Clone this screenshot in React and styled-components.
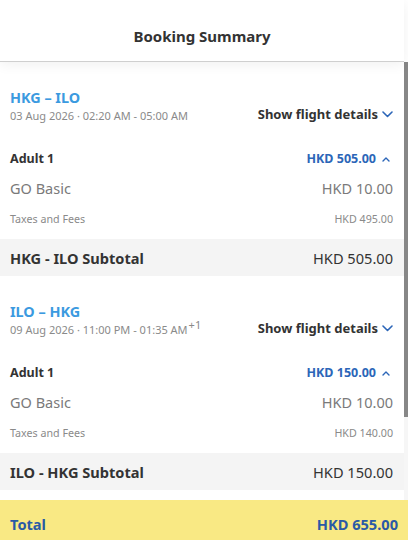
import React, { useLayoutEffect, useRef, useState } from "react";
import styled, { createGlobalStyle } from "styled-components";

const Global = createGlobalStyle`
  html, body { margin: 0; padding: 0; height: 100%; overflow: hidden; background: #fff; }
  body { font-family: "Noto Sans", "Open Sans", sans-serif; color: #333; }
  #root { height: 100%; }
`;

const Page = styled.div`
  height: 540px;
  display: flex;
  flex-direction: column;
  background: #fff;
`;

const Header = styled.header`
  flex: 0 0 auto;
  height: 62px;
  width: calc(100% - 4px);
  display: flex;
  align-items: center;
  justify-content: center;
  border-bottom: 1px solid #cfcfcf;
  box-shadow: 0 3px 12px rgba(0, 0, 0, 0.06);
  position: relative;
  z-index: 1;
  box-sizing: border-box;
  padding-top: 10px;
`;

const HeaderTitle = styled.h1`
  margin: 0;
  font-size: 15px;
  font-weight: 700;
  color: #333;
  line-height: 20px;
`;

const Body = styled.div`
  flex: 1 1 auto;
  min-height: 0;
  display: flex;
`;

const Scroller = styled.div`
  flex: 1 1 auto;
  overflow-y: auto;
  scrollbar-width: none;
  &::-webkit-scrollbar { display: none; }
`;

const Track = styled.div`
  flex: 0 0 4px;
  background: #f6f6f6;
  display: flex;
  flex-direction: column;
`;

const Thumb = styled.div`
  background: #878787;
  width: 100%;
`;

const Content = styled.div`
  padding-bottom: 112px;
`;

const Section = styled.section`
  padding-top: 26px;
`;

const FlightHead = styled.div`
  display: flex;
  align-items: flex-end;
  justify-content: space-between;
  padding: 0 11px 0 10px;
`;

const Route = styled.div`
  font-size: 14.4px;
  font-weight: 700;
  color: #3b9ae0;
  line-height: 19px;
`;

const DateLine = styled.div`
  font-size: 11px;
  color: #8a8a8a;
  line-height: 17px;
  sup {
    font-size: 11px;
    line-height: 0;
    vertical-align: 5px;
    margin-left: 1px;
  }
`;

const DetailsButton = styled.button`
  border: 0;
  background: none;
  padding: 0;
  font-family: inherit;
  font-size: 13px;
  font-weight: 700;
  color: #333;
  display: flex;
  align-items: center;
  gap: 4px;
  line-height: 16px;
  margin-bottom: 2px;
  cursor: pointer;
`;

const Row = styled.div`
  display: flex;
  justify-content: space-between;
  align-items: center;
  padding: 0 11px 0 10px;
  margin-top: ${(p) => p.$mt}px;
`;

const PaxLabel = styled.span`
  font-size: 12.5px;
  font-weight: 700;
  color: #333;
  line-height: 16px;
`;

const PaxPrice = styled.span`
  font-size: 12.5px;
  font-weight: 700;
  color: #2c66b8;
  line-height: 16px;
  display: flex;
  align-items: center;
  gap: 6px;
  padding-right: 3px;
`;

const FareText = styled.span`
  font-size: 14.5px;
  color: #7a7a7a;
  line-height: 20px;
`;

const FeeText = styled.span`
  font-size: 10.7px;
  color: #8a8a8a;
  line-height: 14px;
`;

const Subtotal = styled.div`
  margin-top: 13px;
  height: 37px;
  background: #f4f4f4;
  display: flex;
  align-items: center;
  justify-content: space-between;
  padding: 0 11px 0 10px;
`;

const SubLabel = styled.span`
  font-size: 14.6px;
  font-weight: 700;
  color: #333;
`;

const SubValue = styled.span`
  font-size: 14.6px;
  color: #333;
`;

const Footer = styled.footer`
  flex: 0 0 40px;
  background: #f9e984;
  display: flex;
  justify-content: space-between;
  align-items: flex-start;
  padding: 15px 10px 0 10px;
  box-sizing: border-box;
  font-size: 14.6px;
  font-weight: 700;
  line-height: 18px;
  color: #2a5aa6;
`;

const ChevronDown = () => (
  <svg width="11" height="7" viewBox="0 0 11 7" fill="none">
    <path d="M1 1l4.5 4.5L10 1" stroke="#2c66b8" strokeWidth="1.6" strokeLinecap="round" strokeLinejoin="round" />
  </svg>
);

const ChevronUp = () => (
  <svg width="8" height="5" viewBox="0 0 8 5" fill="none">
    <path d="M1 4l3-3 3 3" stroke="#2c66b8" strokeWidth="1.4" strokeLinecap="round" strokeLinejoin="round" />
  </svg>
);

const flights = [
  {
    route: "HKG – ILO",
    date: "03 Aug 2026 · 02:20 AM - 05:00 AM",
    plus: null,
    price: "HKD 505.00",
    fare: "HKD 10.00",
    fees: "HKD 495.00",
    subLabel: "HKG - ILO Subtotal",
    sub: "HKD 505.00",
  },
  {
    route: "ILO – HKG",
    date: "09 Aug 2026 · 11:00 PM - 01:35 AM",
    plus: "+1",
    price: "HKD 150.00",
    fare: "HKD 10.00",
    fees: "HKD 140.00",
    subLabel: "ILO - HKG Subtotal",
    sub: "HKD 150.00",
  },
];

export default function App() {
  const scrollRef = useRef(null);
  const [ratio, setRatio] = useState(0.8);

  useLayoutEffect(() => {
    const el = scrollRef.current;
    if (el && el.scrollHeight > 0) setRatio(Math.min(1, el.clientHeight / el.scrollHeight));
  }, []);

  return (
    <Page>
      <Global />
      <Header>
        <HeaderTitle>Booking Summary</HeaderTitle>
      </Header>
      <Body>
        <Scroller ref={scrollRef}>
          <Content>
            {flights.map((f) => (
              <Section key={f.route}>
                <FlightHead>
                  <div>
                    <Route>{f.route}</Route>
                    <DateLine>
                      {f.date}
                      {f.plus && <sup>{f.plus}</sup>}
                    </DateLine>
                  </div>
                  <DetailsButton>
                    Show flight details <ChevronDown />
                  </DetailsButton>
                </FlightHead>
                <Row $mt={27}>
                  <PaxLabel>Adult 1</PaxLabel>
                  <PaxPrice>
                    {f.price} <ChevronUp />
                  </PaxPrice>
                </Row>
                <Row $mt={11}>
                  <FareText>GO Basic</FareText>
                  <FareText>{f.fare}</FareText>
                </Row>
                <Row $mt={14}>
                  <FeeText>Taxes and Fees</FeeText>
                  <FeeText>{f.fees}</FeeText>
                </Row>
                <Subtotal>
                  <SubLabel>{f.subLabel}</SubLabel>
                  <SubValue>{f.sub}</SubValue>
                </Subtotal>
              </Section>
            ))}
          </Content>
        </Scroller>
        <Track>
          <Thumb style={{ height: `${ratio * 100}%` }} />
        </Track>
      </Body>
      <Footer>
        <span>Total</span>
        <span>HKD 655.00</span>
      </Footer>
    </Page>
  );
}
